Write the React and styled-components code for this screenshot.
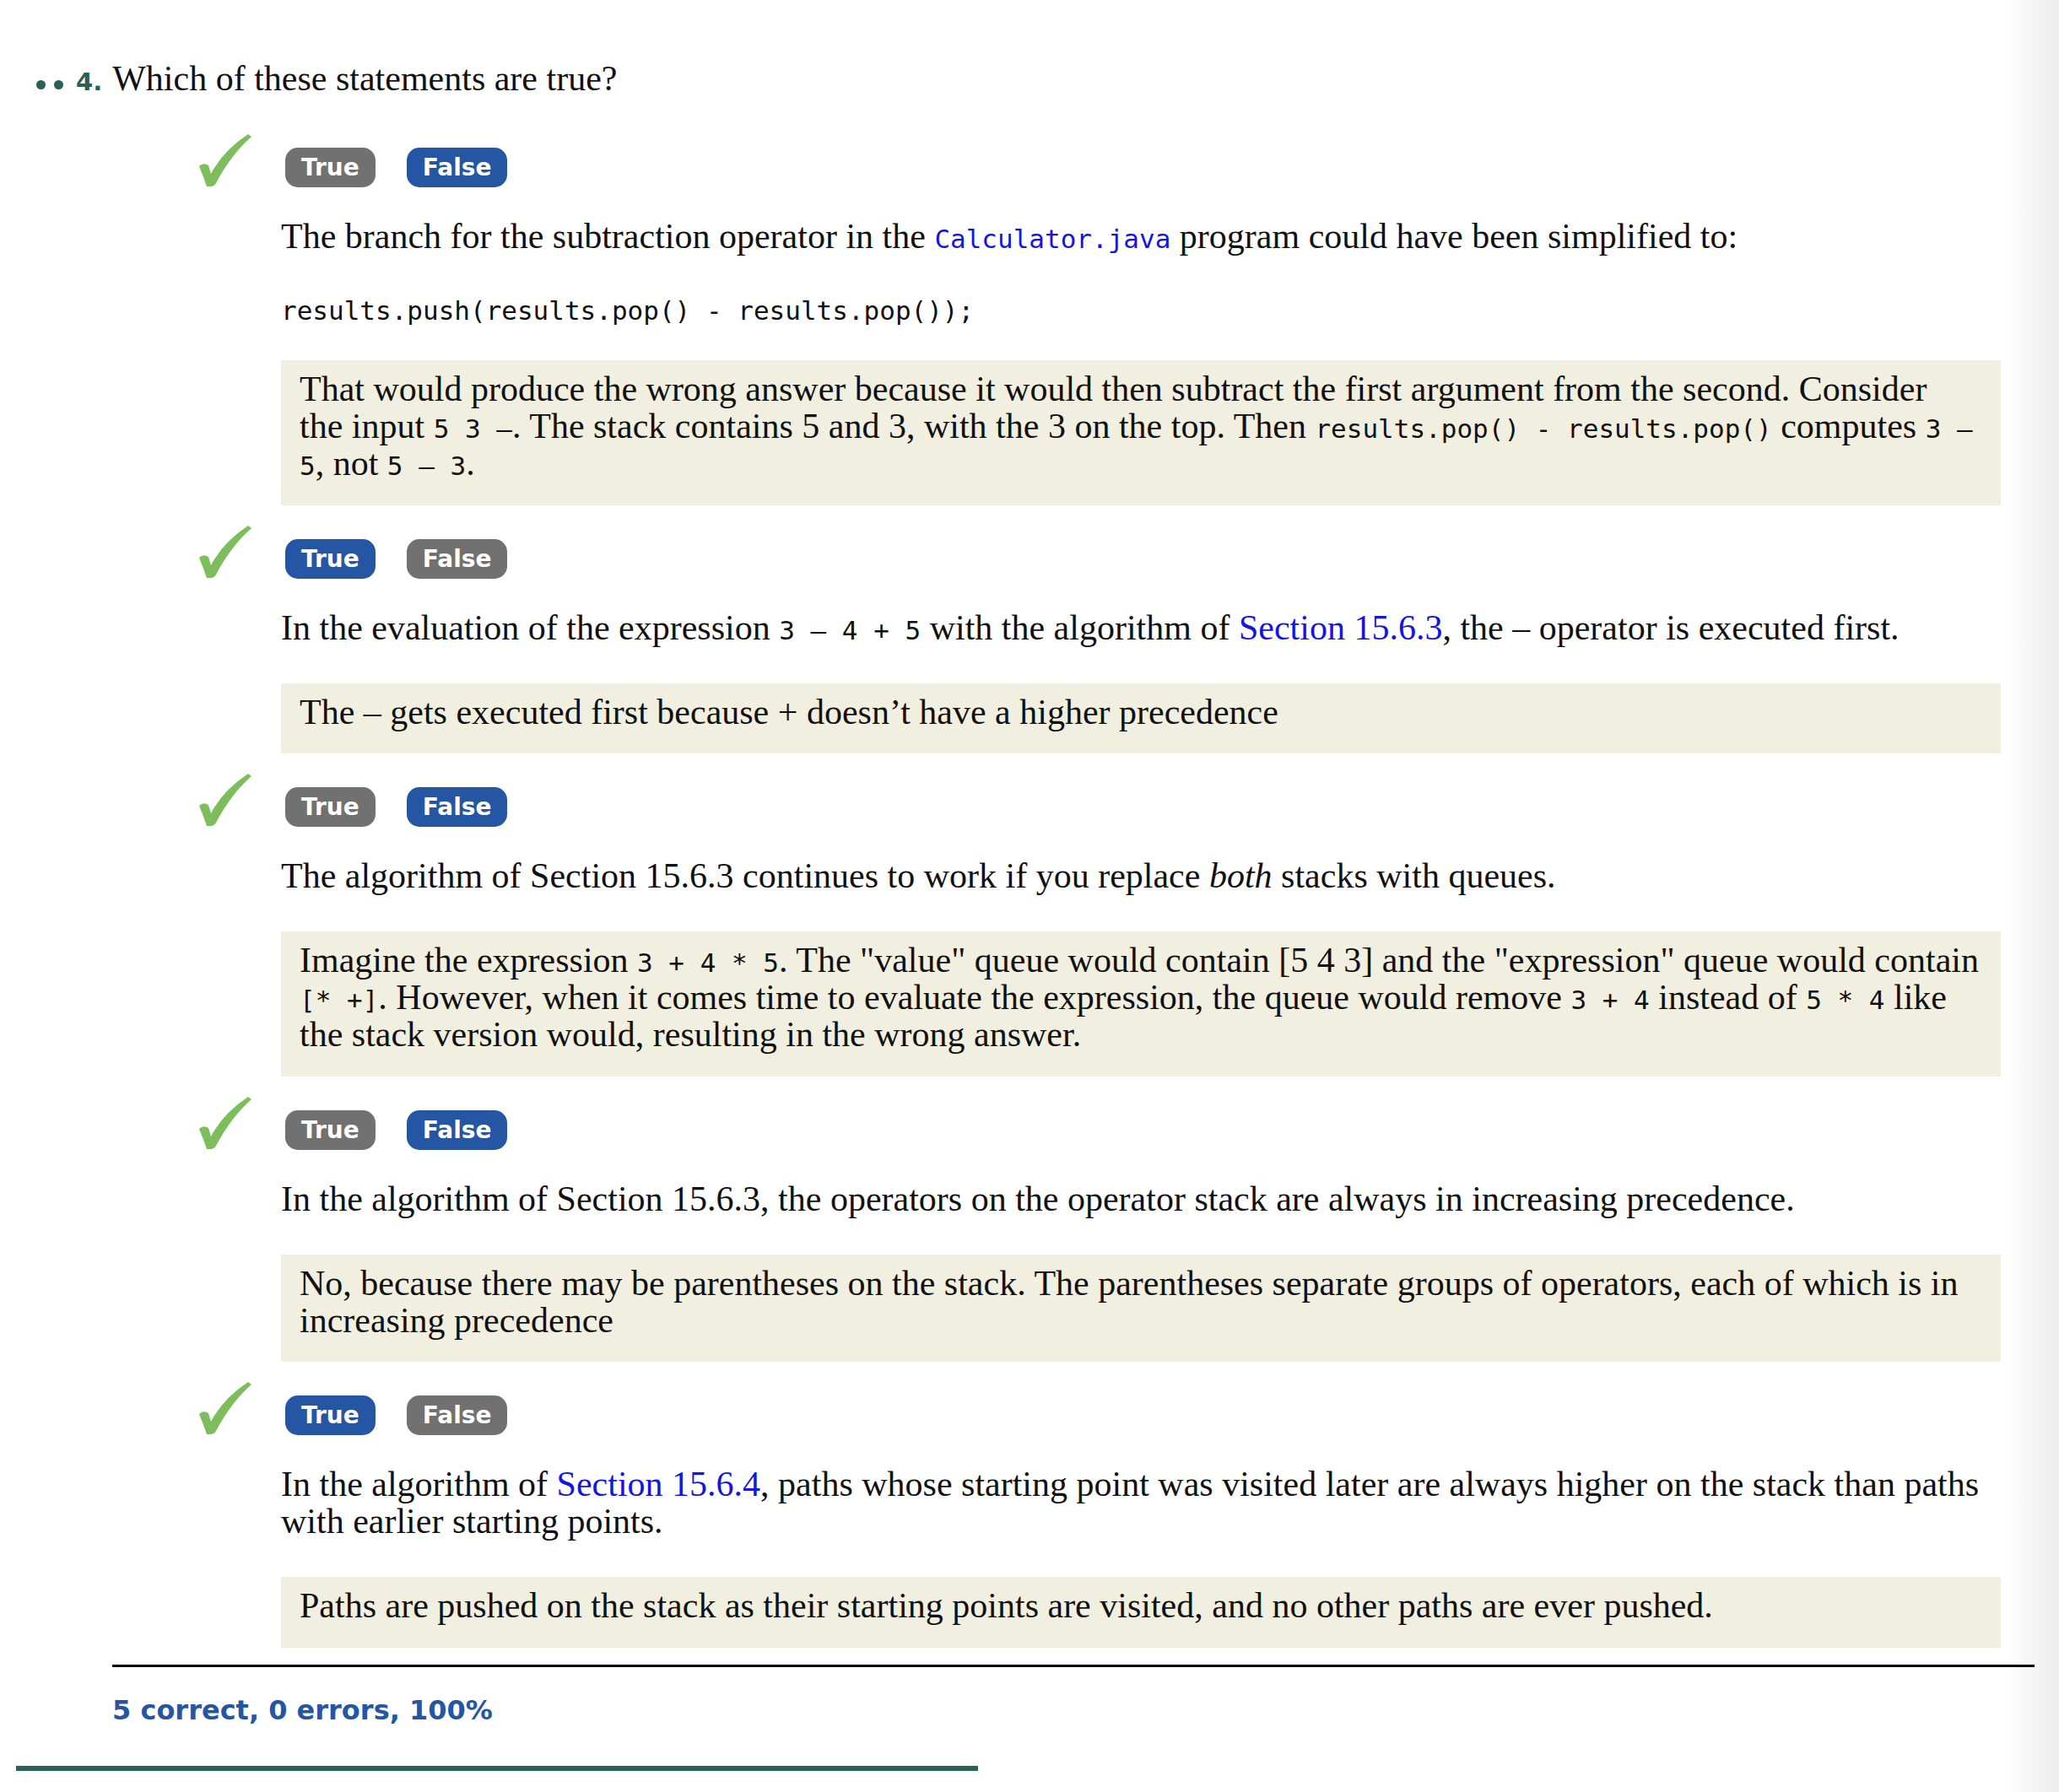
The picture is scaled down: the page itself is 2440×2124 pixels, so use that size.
import React from "react";
import styled, { createGlobalStyle } from "styled-components";

const GlobalStyle = createGlobalStyle`
  html, body {
    margin: 0;
    padding: 0;
  }
  body {
    min-height: 100vh;
    background: linear-gradient(to right, #ffffff 0, #ffffff calc(100% - 64px), #ececec 100%);
    font-family: "Liberation Serif", "Times New Roman", serif;
    color: #111;
  }
`;

const Page = styled.div`
  padding: 71px 0 24px;
`;

const Heading = styled.div`
  display: flex;
  align-items: baseline;
  margin-left: 43px;
  font-size: 42px;
  line-height: 44px;
`;

const Dots = styled.span`
  display: flex;
  gap: 10px;
  margin-right: 15px;
  align-self: center;
  transform: translateY(5px);
`;

const Dot = styled.span`
  width: 11px;
  height: 11px;
  border-radius: 50%;
  background: #2a5f5a;
`;

const Number = styled.span`
  font-family: "DejaVu Sans", sans-serif;
  font-weight: bold;
  font-size: 29px;
  color: #2a5f5a;
  margin-right: 12px;
`;

const List = styled.div`
  margin: 40px 0 0 236px;
  width: 2135px;
  display: flex;
  flex-direction: column;
  gap: 24px;
`;

const Row = styled.div`
  display: flex;
  align-items: flex-end;
  gap: 40px;
`;

const Buttons = styled.div`
  display: flex;
  gap: 37px;
  margin-bottom: -1px;
`;

const Choice = styled.span`
  display: inline-flex;
  align-items: center;
  height: 47px;
  padding: 0 19px;
  border-radius: 15px;
  font-family: "DejaVu Sans", sans-serif;
  font-weight: bold;
  font-size: 28px;
  color: #fff;
  background: ${(p) => (p.$selected ? "#2456a4" : "#717171")};
`;

const Body = styled.div`
  margin-left: 97px;
  font-size: 42px;
  line-height: 44px;
`;

const Statement = styled.p`
  margin: 37px 0 44px;
`;

const CodeBlock = styled.pre`
  margin: 0 0 37px;
  font-family: "DejaVu Sans Mono", monospace;
  font-size: 31px;
  line-height: 44px;
`;

const Code = styled.code`
  font-family: "DejaVu Sans Mono", monospace;
  font-size: 31px;
  line-height: 1;
  color: ${(p) => (p.$link ? "#1414e6" : "inherit")};
`;

const Link = styled.span`
  color: #1414e6;
`;

const Feedback = styled.div`
  background: #f1efdf;
  padding: 12px 12px 27.5px 22px;
`;

const Rule = styled.hr`
  margin: 20px 29px 0 133px;
  border: 0;
  border-top: 3px solid #000;
`;

const Score = styled.div`
  margin: 31px 0 0 133px;
  font-family: "DejaVu Sans", sans-serif;
  font-weight: bold;
  font-size: 32px;
  line-height: 40px;
  color: #2456a4;
`;

const Bar = styled.div`
  margin: 46px 0 0 19px;
  width: 1140px;
  height: 6px;
  background: #2a5f5a;
`;

const Check = () => (
  <svg width="62" height="62" viewBox="0 0 62 62">
    <path
      d="M0 38 Q5 33 11 37 L14 47 Q28 20 58 0 L62 3 Q38 24 20 58 Q18 62 13 62 L9 62 Q5 50 0 38 Z"
      fill="#7dbd5b"
    />
  </svg>
);

const items = [
  {
    selected: "False",
    statement: (
      <>
        The branch for the subtraction operator in the{" "}
        <Code $link>Calculator.java</Code> program could have been simplified
        to:
      </>
    ),
    code: "results.push(results.pop() - results.pop());",
    feedback: (
      <>
        That would produce the wrong answer because it would then subtract the
        first argument from the second. Consider
        <br />
        the input <Code>5 3 –</Code>. The stack contains 5 and 3, with the 3 on
        the top. Then <Code>results.pop() - results.pop()</Code> computes{" "}
        <Code>3 –</Code>
        <br />
        <Code>5</Code>, not <Code>5 – 3</Code>.
      </>
    ),
  },
  {
    selected: "True",
    statement: (
      <>
        In the evaluation of the expression <Code>3 – 4 + 5</Code> with the
        algorithm of <Link>Section 15.6.3</Link>, the – operator is executed
        first.
      </>
    ),
    feedback: <>The – gets executed first because + doesn’t have a higher precedence</>,
  },
  {
    selected: "False",
    statement: (
      <>
        The algorithm of Section 15.6.3 continues to work if you replace{" "}
        <em>both</em> stacks with queues.
      </>
    ),
    feedback: (
      <>
        Imagine the expression <Code>3 + 4 * 5</Code>. The "value" queue would
        contain [5 4 3] and the "expression" queue would contain
        <br />
        <Code>[* +]</Code>. However, when it comes time to evaluate the
        expression, the queue would remove <Code>3 + 4</Code> instead of{" "}
        <Code>5 * 4</Code> like
        <br />
        the stack version would, resulting in the wrong answer.
      </>
    ),
  },
  {
    selected: "False",
    statement: (
      <>
        In the algorithm of Section 15.6.3, the operators on the operator stack
        are always in increasing precedence.
      </>
    ),
    feedback: (
      <>
        No, because there may be parentheses on the stack. The parentheses
        separate groups of operators, each of which is in
        <br />
        increasing precedence
      </>
    ),
  },
  {
    selected: "True",
    statement: (
      <>
        In the algorithm of <Link>Section 15.6.4</Link>, paths whose starting
        point was visited later are always higher on the stack than paths
        <br />
        with earlier starting points.
      </>
    ),
    feedback: (
      <>
        Paths are pushed on the stack as their starting points are visited, and
        no other paths are ever pushed.
      </>
    ),
  },
];

const App = () => {
  return (
    <Page>
      <GlobalStyle />
      <Heading>
        <Dots>
          <Dot />
          <Dot />
        </Dots>
        <Number>4.</Number>
        <span>Which of these statements are true?</span>
      </Heading>
      <List>
        {items.map((item, i) => (
          <div key={i}>
            <Row>
              <Check />
              <Buttons>
                <Choice $selected={item.selected === "True"}>True</Choice>
                <Choice $selected={item.selected === "False"}>False</Choice>
              </Buttons>
            </Row>
            <Body>
              <Statement>{item.statement}</Statement>
              {item.code && <CodeBlock>{item.code}</CodeBlock>}
              <Feedback>{item.feedback}</Feedback>
            </Body>
          </div>
        ))}
      </List>
      <Rule />
      <Score>5 correct, 0 errors, 100%</Score>
      <Bar />
    </Page>
  );
};

export default App;
